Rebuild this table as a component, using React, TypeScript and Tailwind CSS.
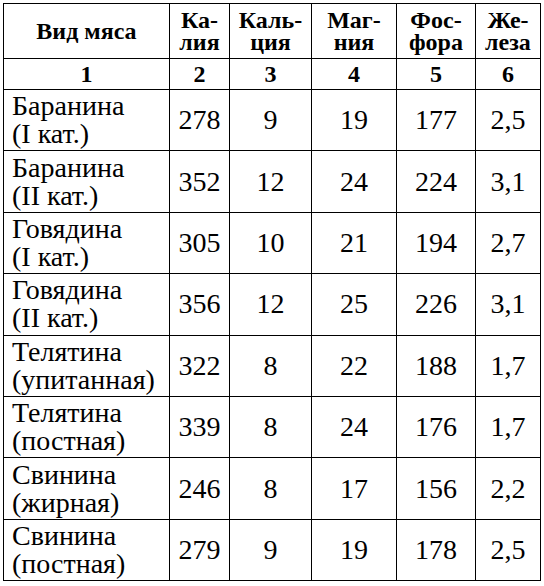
import React from "react";

type Row = {
  name: string;
  sub: string;
  values: string[];
};

const headers = [
  ["Ка-", "лия"],
  ["Каль-", "ция"],
  ["Маг-", "ния"],
  ["Фос-", "фора"],
  ["Же-", "леза"],
];

const rows: Row[] = [
  { name: "Баранина", sub: "(I кат.)", values: ["278", "9", "19", "177", "2,5"] },
  { name: "Баранина", sub: "(II кат.)", values: ["352", "12", "24", "224", "3,1"] },
  { name: "Говядина", sub: "(I кат.)", values: ["305", "10", "21", "194", "2,7"] },
  { name: "Говядина", sub: "(II кат.)", values: ["356", "12", "25", "226", "3,1"] },
  { name: "Телятина", sub: "(упитанная)", values: ["322", "8", "22", "188", "1,7"] },
  { name: "Телятина", sub: "(постная)", values: ["339", "8", "24", "176", "1,7"] },
  { name: "Свинина", sub: "(жирная)", values: ["246", "8", "17", "156", "2,2"] },
  { name: "Свинина", sub: "(постная)", values: ["279", "9", "19", "178", "2,5"] },
];

const cell = "border-[1.5px] border-black";

const App: React.FC = () => {
  return (
    <div className="w-[544px] h-[586px] bg-white pt-[3px] pl-[3px] font-['Liberation_Serif',serif] text-black">
      <table className="table-fixed border-collapse w-[537px] font-['Liberation_Serif',serif]">
        <colgroup>
          <col className="w-[166px]" />
          <col className="w-[60px]" />
          <col className="w-[82px]" />
          <col className="w-[85px]" />
          <col className="w-[79px]" />
          <col className="w-[65px]" />
        </colgroup>
        <thead>
          {/* Заголовок */}
          <tr className="h-[55px]">
            <th className={`${cell} text-[24px] leading-[22px] font-bold text-center align-middle`}>
              Вид мяса
            </th>
            {headers.map(([a, b], i) => (
              <th key={i} className={`${cell} text-[24px] leading-[22px] font-bold text-center align-middle px-0`}>
                {a}
                <br />
                {b}
              </th>
            ))}
          </tr>
          {/* Номера столбцов */}
          <tr className="h-[31px]">
            {["1", "2", "3", "4", "5", "6"].map(n => (
              <th key={n} className={`${cell} text-[24px] leading-[24px] font-bold text-center align-middle`}>
                {n}
              </th>
            ))}
          </tr>
        </thead>
        <tbody>
          {rows.map((row, i) => (
            <tr key={i} className="h-[61.4px]">
              <td className={`${cell} text-[28px] leading-[28px] text-left align-middle pl-[8px] pr-0 whitespace-nowrap`}>
                {row.name}
                <br />
                {row.sub}
              </td>
              {row.values.map((v, j) => (
                <td key={j} className={`${cell} text-[28px] leading-[28px] text-center align-middle`}>
                  {v}
                </td>
              ))}
            </tr>
          ))}
        </tbody>
      </table>
    </div>
  );
};

export default App;
